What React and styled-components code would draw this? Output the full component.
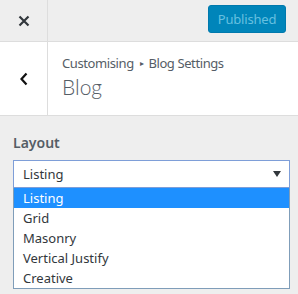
import { createGlobalStyle, styled } from "styled-components";

const GlobalStyle = createGlobalStyle`
  html, body {
    margin: 0;
    background: #eeeeee;
    font-family: "Noto Sans", "Open Sans", sans-serif;
    color: #555d66;
  }
`;

const options = ["Listing", "Grid", "Masonry", "Vertical Justify", "Creative"];

export default function App() {
  return (
    <S_panel>
      <GlobalStyle />
      <S_header>
        <S_iconCell>
          <svg width="12" height="12" viewBox="0 0 12 12">
            <path d="M1.5 1.5 L10.5 10.5 M10.5 1.5 L1.5 10.5" stroke="#32373c" strokeWidth="2.2" />
          </svg>
        </S_iconCell>
        <S_publish>Published</S_publish>
      </S_header>
      <S_titleSection>
        <S_iconCell>
          <svg width="10" height="14" viewBox="0 0 10 14">
            <path d="M7.5 1.5 L2.5 7 L7.5 12.5" stroke="#111" strokeWidth="2.2" fill="none" />
          </svg>
        </S_iconCell>
        <S_titleText>
          <S_crumb>
            Customising<S_arrow>▸</S_arrow>Blog Settings
          </S_crumb>
          <S_title>Blog</S_title>
        </S_titleText>
      </S_titleSection>
      <S_body>
        <S_label>Layout</S_label>
        <S_select>
          <span>Listing</span>
          <S_caret />
        </S_select>
        <S_list>
          {options.map((o, i) => (
            <S_option key={o} $active={i === 0}>
              {o}
            </S_option>
          ))}
        </S_list>
      </S_body>
    </S_panel>
  );
}

const S_panel = styled.div`
  width: 298px;
  height: 294px;
  overflow: hidden;
`;

const S_header = styled.div`
  display: flex;
  align-items: flex-start;
  justify-content: space-between;
  height: 41px;
  border-bottom: 1px solid #dddddd;
  background: #eeeeee;
`;

const S_iconCell = styled.div`
  display: flex;
  align-items: center;
  justify-content: center;
  width: 47px;
  align-self: stretch;
  border-right: 1px solid #dddddd;
`;

const S_publish = styled.button`
  margin: 5px 12px 0 0;
  width: 78px;
  height: 28px;
  border: 1px solid #0079ad;
  border-radius: 3px;
  background: #0085ba;
  color: #66c0e0;
  font-family: inherit;
  font-size: 13px;
  letter-spacing: -0.2px;
  padding: 0;
`;

const S_titleSection = styled.div`
  display: flex;
  height: 73px;
  background: #ffffff;
  border-bottom: 1px solid #dddddd;
`;

const S_titleText = styled.div`
  display: flex;
  flex-direction: column;
  justify-content: center;
  padding-left: 14px;
  padding-bottom: 2px;
`;

const S_crumb = styled.div`
  font-size: 13px;
  line-height: 18px;
  letter-spacing: -0.4px;
  color: #555d66;
`;

const S_arrow = styled.span`
  font-size: 8px;
  vertical-align: 2px;
  padding: 0 5px 0 6px;
`;

const S_title = styled.div`
  font-family: "Lato", "Noto Sans", sans-serif;
  font-size: 21px;
  font-weight: 300;
  line-height: 30px;
  color: #555d66;
`;

const S_body = styled.div`
  padding: 17px 8px 0 13px;
`;

const S_label = styled.div`
  font-size: 14px;
  font-weight: 600;
  line-height: 20px;
  margin-bottom: 7px;
  color: #555d66;
`;

const S_select = styled.div`
  display: flex;
  align-items: center;
  justify-content: space-between;
  height: 26px;
  padding: 0 8px 0 9px;
  border: 1px solid #7e9ed8;
  background: #ffffff;
  font-size: 13px;
  color: #32373c;
`;

const S_caret = styled.span`
  width: 0;
  height: 0;
  border-left: 4px solid transparent;
  border-right: 4px solid transparent;
  border-top: 6px solid #32373c;
`;

const S_list = styled.div`
  border: 1px solid #7f9db9;
  border-top: none;
  background: #ffffff;
`;

const S_option = styled.div`
  height: 20px;
  line-height: 20px;
  padding-left: 9px;
  font-size: 13px;
  color: ${(p) => (p.$active ? "#ffffff" : "#32373c")};
  background: ${(p) => (p.$active ? "#1e90ff" : "transparent")};
`;
